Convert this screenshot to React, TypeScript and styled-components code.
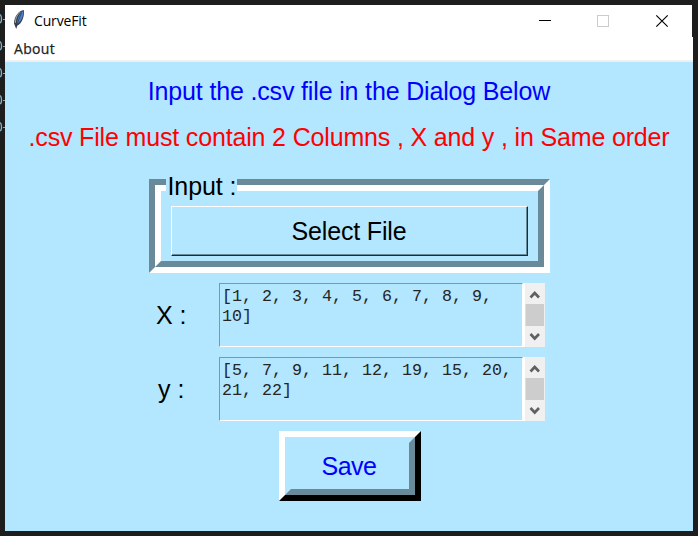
import React from "react";
import styled, { createGlobalStyle } from "styled-components";

const SKY = "#b3e6ff";
const SHADE = "#6b8a99";

const GlobalStyle = createGlobalStyle`
  * { box-sizing: border-box; }
  body { margin: 0; background: #1e1e1e; overflow: hidden; }
  button { font: inherit; padding: 0; cursor: default; border-radius: 0; background: none; }
`;

const Desktop = styled.div`
  display: flex;
  width: 698px;
  height: 536px;
  background: #1e1e1e;
`;

const Gutter = styled.svg`
  flex: none;
  width: 5px;
  height: 536px;
`;

const Window = styled.main`
  display: flex;
  flex-direction: column;
  width: 688px;
  height: 526px;
  margin-top: 5px;
  background: ${SKY};
`;

const TitleStrip = styled.header`
  background: #1e1e1e;
`;

const TitleBar = styled.div`
  display: flex;
  align-items: flex-start;
  width: 687px;
  height: 32px;
  padding-left: 6px;
  background: #fff;
`;

const Feather = styled.svg`
  width: 16px;
  height: 22px;
  margin-top: 3px;
`;

const Title = styled.span`
  flex: 1;
  margin-left: 7px;
  font: 14px/32px "Open Sans", sans-serif;
  letter-spacing: -0.15px;
  color: #000;
`;

const Controls = styled.svg`
  width: 160px;
  height: 32px;
`;

const MenuBar = styled.nav`
  height: 25px;
  padding-left: 9px;
  background: #fff;
  border-bottom: 2px solid #f0f0f0;
  font: 14px/24px "Open Sans", sans-serif;
  letter-spacing: 0.3px;
  color: #222;
  -webkit-text-stroke: 0.25px #222;
`;

const Content = styled.section`
  display: flex;
  flex-direction: column;
  align-items: center;
  font: 25px/30px "Liberation Sans", Arial, sans-serif;
  color: #000;
`;

const Heading = styled.p<{ $color: string; $top: number }>`
  margin: ${(p) => p.$top}px 0 0;
  height: 30px;
  color: ${(p) => p.$color};
  letter-spacing: -0.16px;
  white-space: nowrap;
`;

const Group = styled.section`
  width: 401px;
  height: 94px;
  margin-top: 27px;
  border: 6px solid;
  border-color: ${SHADE} #fff #fff ${SHADE};
`;

const GroupInner = styled.div`
  display: flex;
  flex-direction: column;
  height: 82px;
  border: 6px solid;
  border-color: #fff ${SHADE} ${SHADE} #fff;
`;

const Legend = styled.span`
  width: 71px;
  height: 24px;
  margin: -17px 0 0 5px;
  padding-left: 2px;
  background: ${SKY};
  line-height: 24px;
  letter-spacing: -0.1px;
  white-space: nowrap;
`;

const SelectButton = styled.button`
  width: 357px;
  height: 50px;
  margin: 8px 0 0 10px;
  border: 1px solid;
  border-color: #fff #222b30 #222b30 #fff;
  box-shadow: inset -1px -1px ${SHADE};
  letter-spacing: -0.16px;
`;

const Row = styled.div`
  display: flex;
  align-items: center;
  align-self: flex-start;
  height: 64px;
  margin: 10px 0 0 144px;
`;

const RowLabel = styled.label<{ $indent: number }>`
  width: 70px;
  padding-left: ${(p) => p.$indent}px;
  white-space: nowrap;
`;

const TextBox = styled.div`
  width: 304px;
  height: 64px;
  padding: 3px 0 0 2px;
  border: 1px solid;
  border-color: #7899aa #fff #fff #7899aa;
  font: 16.67px/20px "Liberation Mono", monospace;
  color: #252525;
  white-space: pre;
`;

const ScrollBar = styled.svg`
  width: 22px;
  height: 64px;
  background: #f0f0f0;
`;

const SaveButton = styled.button`
  width: 142px;
  height: 70px;
  margin: 10px 0 0 2px;
  border: 6px solid;
  border-color: #fff #000 #000 #fff;
`;

const SaveFace = styled.span`
  display: flex;
  align-items: center;
  justify-content: center;
  height: 58px;
  padding-right: 2px;
  border: 6px solid;
  border-color: ${SKY} ${SHADE} ${SHADE} ${SKY};
  color: #0000ff;
  letter-spacing: -0.5px;
`;

function Scroller() {
  return (
    <ScrollBar viewBox="0 0 22 64">
      <path d="M1 0v64" stroke="#fff" strokeWidth="2" />
      <rect x="2.5" y="21" width="18.5" height="22" fill="#cdcdcd" />
      <path d="M7.5 14.5 L11.7 10 L16 14.5" fill="none" stroke="#606060" strokeWidth="2.6" />
      <path d="M7.5 51 L11.7 55.5 L16 51" fill="none" stroke="#606060" strokeWidth="2.6" />
    </ScrollBar>
  );
}

const rows = [
  { label: "X :", indent: 7, text: "[1, 2, 3, 4, 5, 6, 7, 8, 9,\n10]" },
  { label: "y :", indent: 9, text: "[5, 7, 9, 11, 12, 19, 15, 20,\n21, 22]" },
];

export default function App() {
  return (
    <Desktop>
      <GlobalStyle />
      <Gutter viewBox="0 0 5 536">
        {[19, 46, 73, 100, 127].map((y) => (
          <g key={y} fill="none">
            <path d={`M0 ${y - 4.5}q1.5 1 1.5 4.5t-1.5 4`} stroke="#82b6cc" strokeWidth="1.3" />
            <path d={`M3 ${y + 0.5}h2`} stroke="#a0a0a0" />
          </g>
        ))}
      </Gutter>
      <Window>
        <TitleStrip>
          <TitleBar>
            <Feather viewBox="0 0 16 22">
              <path d="M12.8 2 C8 2.5 3.3 8 3 15.5 L5.2 21 L6.4 17.5 C10.5 16 13.8 9 12.8 2Z" fill="#3c4148" />
              <path d="M12 3.2 C8.8 5 6.5 10 5.8 16 C10 13.5 12.8 8 12 3.2Z" fill="#4a83cf" />
              <path d="M9.5 3.8 C6 6.5 4.2 11 4.4 15" stroke="#9aa4ae" fill="none" />
              <path d="M10.5 5 L5.2 18" stroke="#1d3557" strokeWidth=".7" />
            </Feather>
            <Title>CurveFit</Title>
            <Controls viewBox="0 0 160 32">
              <path d="M7 15.5h12" stroke="#000" />
              <rect x="65.5" y="10.5" width="11" height="11" fill="none" stroke="#ccc" />
              <path d="M124.3 10.3l11.4 11.4M135.7 10.3l-11.4 11.4" stroke="#000" strokeWidth="1.15" />
            </Controls>
          </TitleBar>
        </TitleStrip>
        <MenuBar>About</MenuBar>
        <Content>
          <Heading $color="#0000ff" $top={14}>Input the .csv file in the Dialog Below</Heading>
          <Heading $color="#ff0000" $top={16}>.csv File must contain 2 Columns , X and y , in Same order</Heading>
          <Group>
            <GroupInner>
              <Legend>Input :</Legend>
              <SelectButton>Select File</SelectButton>
            </GroupInner>
          </Group>
          {rows.map((r) => (
            <Row key={r.label}>
              <RowLabel $indent={r.indent}>{r.label}</RowLabel>
              <TextBox>{r.text}</TextBox>
              <Scroller />
            </Row>
          ))}
          <SaveButton>
            <SaveFace>Save</SaveFace>
          </SaveButton>
        </Content>
      </Window>
    </Desktop>
  );
}
